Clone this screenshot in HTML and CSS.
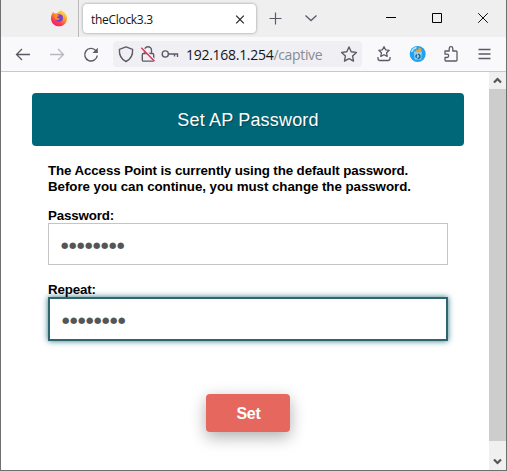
FILE: index.html
```html
<!DOCTYPE html>
<html lang="en">
<head>
<meta charset="utf-8">
<title>theClock3.3</title>
<link rel="stylesheet" href="styles.css">
</head>
<body>
<div class="window">
  <div class="tabbar">
    <div class="pinned">
      <svg class="icon" viewBox="0 0 20 20">
        <defs>
          <linearGradient id="fire" x1=".85" y1=".05" x2=".25" y2="1"><stop offset="0" stop-color="#ffe34a"/><stop offset=".4" stop-color="#ff9a2b"/><stop offset=".72" stop-color="#fb3e4c"/><stop offset="1" stop-color="#e91e74"/></linearGradient>
        </defs>
        <path d="M4.2 4.1l1.7 1.3 2.5-.5C9.5 3.5 11 3 12 2.2c1 .1 1.600.8 2 1.500 2.300 1.200 4 3.600 4 6.800 0 4.500-3.500 7.800-8 7.800s-8-3.300-8-7.800C2 7.700 2.800 5.700 4.200 4.100z" fill="url(#fire)"/>
        <circle cx="10.300" cy="10" r="3.700" fill="#7542cf"/>
        <path d="M5.600 7c1.900-.6 3.400 0 4.600 1-1.400.2-2 .9-2.200 1.700 1.300.2 1.800 1 2.800.8-1 2-3.200 2-4.600.8-.8-1.200-1-2.700-.6-4.300z" fill="#ff8a2c"/>
      </svg>
    </div>
    <div class="tab">
      <span class="tab-title">theClock3.3</span>
      <svg class="icon" viewBox="0 0 20 20"><path d="M6.200 6.700l7.600 7.600m0-7.600l-7.600 7.600" stroke="#222" stroke-width="1.200"/></svg>
    </div>
    <svg class="icon plus" viewBox="0 0 20 20"><path d="M9.500 4.500v12M3.500 10.500h12" stroke="#5b5b66" stroke-width="1.200"/></svg>
    <svg class="icon all-tabs" viewBox="0 0 20 20"><path d="M4.500 7.500l5.500 5 5.500-5" stroke="#5b5b66" stroke-width="1.300"/></svg>
    <div class="controls">
      <svg class="icon" viewBox="0 0 20 20"><path d="M5 9.500h10" stroke="#000"/></svg>
      <svg class="icon" viewBox="0 0 20 20"><path d="M5.500 5.500h9v9h-9z" stroke="#000"/></svg>
      <svg class="icon" viewBox="0 0 20 20"><path d="M5.200 5.200l9.600 9.600m0-9.600l-9.600 9.600" stroke="#111"/></svg>
    </div>
  </div>
  <div class="toolbar">
    <div class="nav">
      <svg class="icon" viewBox="0 0 20 20"><path d="M17 10.500H3.500M9 5l-5.500 5.500L9 16" stroke="#5b5b66" stroke-width="1.300"/></svg>
      <svg class="icon" viewBox="0 0 20 20"><path d="M3 10.500h13.500M11 5l5.500 5.500L11 16" stroke="#b9b9be" stroke-width="1.300"/></svg>
      <svg class="icon" viewBox="0 0 20 20"><path d="M14.900 6.700A6.300 6.300 0 1 0 16.300 11.500" stroke="#5b5b66" stroke-width="1.400"/><path d="M16.800 3.800v5.300h-5.300z" fill="#5b5b66"/></svg>
    </div>
    <div class="urlbar">
      <svg class="icon" viewBox="0 0 20 20"><path d="M10 2.900l6.600 2.400c.3 5-1 9.700-6.600 12.200C4.400 15 3.100 10.300 3.400 5.300z" stroke="#5b5b66" stroke-width="1.400" stroke-linejoin="round"/></svg>
      <svg class="icon" viewBox="0 0 20 20"><path d="M6.500 9.500V6.300a3.500 3.500 0 0 1 7 0v3.200M5.500 9.500h9q1.200 0 1.200 1.200v5.200q0 1.200-1.200 1.200h-9q-1.200 0-1.200-1.200v-5.200q0-1.200 1.200-1.200z" stroke="#5b5b66" stroke-width="1.400"/><path d="M3.800 3.700l13 13" stroke="#f0eff5" stroke-width="2.500"/><path d="M3.300 3.800l13.200 13.400" stroke="#e22850" stroke-width="1.300"/></svg>
      <svg class="icon" viewBox="0 0 20 20"><circle cx="5.300" cy="10" r="3.100" stroke="#5b5b66" stroke-width="1.400"/><path d="M8.400 10h9.100v3M14.500 10v2.500" stroke="#5b5b66" stroke-width="1.400"/></svg>
      <div class="url"><span class="host">192.168.1.254</span><span class="path">/captive</span></div>
      <svg class="icon" viewBox="0 0 20 20"><path d="M10 3l2.200 4.700 5.200.7-3.800 3.600.9 5.100-4.500-2.500-4.500 2.500.9-5.100-3.800-3.600 5.200-.7z" stroke="#5b5b66" stroke-width="1.400" stroke-linejoin="round"/></svg>
    </div>
    <div class="actions">
      <svg class="icon" viewBox="0 0 20 20"><path d="M10 2.700l1.600 3.100 3.600.5-2.600 2.500.6 3.600-3.200-1.700-3.200 1.700.6-3.600-2.600-2.500 3.600-.5zM4 13v1.500q0 2 2 2h8q2 0 2-2V13" stroke="#5b5b66" stroke-width="1.300" stroke-linejoin="round"/></svg>
      <svg class="icon" viewBox="0 0 20 20"><circle cx="9.700" cy="10" r="8" fill="#20a3ee"/><path d="M3.500 8a7 7 0 0 1 5-4.500" stroke="#b5e8ff" stroke-width="1.300"/><path d="M5.800 7.500h8.200l-.8 8H6.600z" fill="#8bd0f3"/><path d="M7 7.500l1.500-2 1.500.4 1-2.400 2 1 .8 3-2.800.9z" fill="#f0a13c"/><circle cx="10" cy="12.300" r="2" stroke="#145c8f" stroke-width="1.300" stroke-dasharray="3.200 1"/></svg>
      <svg class="icon" viewBox="0 0 20 20"><path d="M4 7h4.200V4.400a1.800 1.800 0 0 1 3.600 0V7h3.200q1 0 1 1v8q0 1-1 1H5q-1 0-1-1v-2.500h2a1.600 1.600 0 0 0 0-3.300H4z" stroke="#5b5b66" stroke-width="1.300" stroke-linejoin="round"/></svg>
      <svg class="icon" viewBox="0 0 20 20"><path d="M3.500 5.500h12M3.500 10h12M3.500 14.500h12" stroke="#5b5b66" stroke-width="1.300"/></svg>
    </div>
  </div>
  <div class="viewport">
    <main class="page">
      <h1 class="banner">Set AP Password</h1>
      <form class="form">
        <p class="notice"><span class="line-one">The Access Point is currently using the default password.</span><br>Before you can continue, you must change the password.</p>
        <label class="label" for="pass">Password:</label>
        <div class="field" id="pass">●●●●●●●●</div>
        <label class="label" for="again">Repeat:</label>
        <div class="field focused" id="again">●●●●●●●●</div>
        <button class="submit" type="button">Set</button>
      </form>
    </main>
    <div class="scrollbar">
      <svg class="arrow" viewBox="0 0 17 17"><path d="M5 10.500l3.500-3.500 3.500 3.500" stroke="#555" stroke-width="2.200"/></svg>
      <div class="thumb"></div>
      <svg class="arrow down" viewBox="0 0 17 17"><path d="M5 6.500l3.500 3.500L12 6.500" stroke="#555" stroke-width="2.200"/></svg>
    </div>
  </div>
</div>
</body>
</html>
```

FILE: styles.css
```css
* { box-sizing: border-box; }

body { margin: 0; background: #fff; font-family: "Liberation Sans", Arial, sans-serif; }

svg { display: block; fill: none; }

.window {
  width: 507px;
  height: 471px;
  display: flex;
  flex-direction: column;
  border: solid #707070;
  border-width: 0 1px 1px;
  overflow: hidden;
}

.icon { width: 20px; height: 20px; flex: none; }

.tabbar {
  height: 37px;
  flex: none;
  display: flex;
  align-items: center;
  background: #efefef;
  padding-bottom: 1px;
}

.pinned {
  width: 78px;
  height: 37px;
  margin-bottom: -1px;
  padding: 8px 0 0 48px;
  border-right: 1px solid #b8b8b8;
  flex: none;
}

.tab {
  width: 173px;
  height: 29px;
  margin: 1px 0 0 4px;
  padding: 0 6px 0 8px;
  display: flex;
  align-items: center;
  justify-content: space-between;
  background: #fff;
  border-radius: 4px;
  box-shadow: 0 0 3px rgba(0, 0, 0, .4);
}

.tab-title { padding-top: 2px; font: 12px/16px "Open Sans", "Noto Sans", sans-serif; color: #15141a; letter-spacing: -.3px; }

.plus { margin-left: 10px; }
.all-tabs { margin-left: 15px; }

.controls { display: flex; gap: 26px; margin-left: 60px; }

.toolbar {
  height: 35px;
  flex: none;
  display: flex;
  align-items: center;
  background: #f9f9fb;
  border-bottom: 1px solid #c8c8cb;
}

.nav { display: flex; gap: 14px; margin-left: 12px; }

.urlbar {
  width: 249px;
  height: 26px;
  margin-left: 12px;
  padding: 0 3px;
  display: flex;
  align-items: center;
  gap: 2px;
  background: #f0f0f4;
  border-radius: 4px;
}

.url { flex: 1; padding: 2px 0 0 4px; font: 14px/20px "Open Sans", "Noto Sans", sans-serif; white-space: nowrap; }
.host { color: #15141a; letter-spacing: -.28px; }
.path { color: #8a8a90; letter-spacing: -.35px; }

.actions { display: flex; gap: 13.500px; margin-left: 12px; }

.viewport { flex: 1; display: flex; min-height: 0; }

.page { flex: 1; padding: 21px 25px 0 31px; background: #fff; }

.banner {
  height: 53px;
  margin: 0;
  background: #006778;
  border-radius: 4px;
  color: #fff;
  font-size: 18px;
  font-weight: 400;
  line-height: 55px;
  letter-spacing: .18px;
  text-align: center;
  text-shadow: 1px 1px 1px rgba(0, 0, 0, .3);
}

.form { padding: 17px 16px 0; font-size: 13.330px; }

.notice { margin: 0 0 13px; font-weight: 700; line-height: 16px; letter-spacing: -.055px; white-space: nowrap; }
.line-one { letter-spacing: -.105px; }

.label { display: block; font-weight: 700; line-height: 15px; height: 15px; letter-spacing: -.15px; }

.field {
  height: 42px;
  margin-bottom: 17px;
  padding-left: 12px;
  border: 1px solid #c5c5c5;
  background: #fff;
  color: #555;
  font: 8.500px/42px "DejaVu Sans", sans-serif;
  letter-spacing: .570px;
}

.focused {
  height: 44px;
  margin-bottom: 53px;
  border: 2px solid #2f656e;
  box-shadow: 0 0 6px #2f7784;
}

.submit {
  display: block;
  width: 84px;
  height: 38px;
  margin: 0 auto;
  padding: 1px 0 0 1px;
  border: 0;
  border-radius: 4px;
  background: #e5675e;
  color: #fff;
  font: 700 16px/38px "Liberation Sans", Arial, sans-serif;
  letter-spacing: -.3px;
  box-shadow: 0 5px 16px rgba(0, 0, 0, .32);
}

.scrollbar { width: 17px; flex: none; display: flex; flex-direction: column; background: #f0f0f0; }
.arrow { width: 17px; height: 17px; flex: none; }
.thumb { height: 352px; flex: none; background: #cdcdcd; }
.down { margin-top: auto; }
```
